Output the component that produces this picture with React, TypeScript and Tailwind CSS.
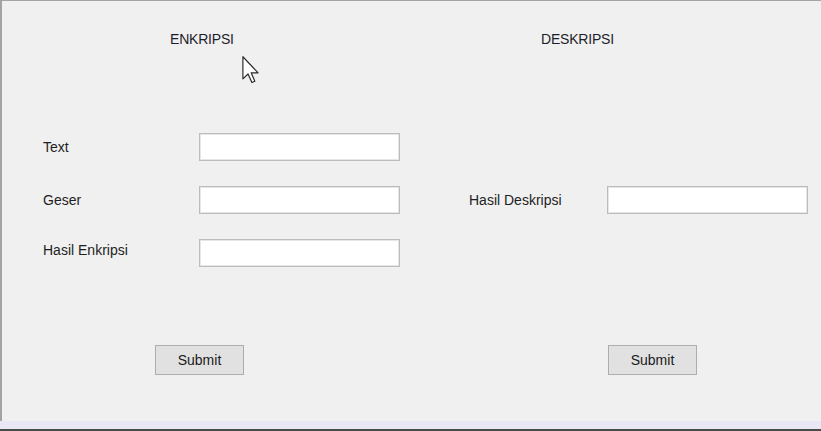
const font = { fontFamily: '"Liberation Sans", Arial, sans-serif' };

const Field = ({ label, labelWidth = "w-[156px]", labelClass = "" }: { label: string; labelWidth?: string; labelClass?: string }) => (
  <div className="flex items-center">
    <span className={`${labelWidth} shrink-0 text-[14px] text-[#1e1e1e] ${labelClass}`}>{label}</span>
    <div className="w-[201px] h-[28px] shrink-0 bg-white border border-[#bcbcbc] shadow-[inset_0_0_0_1px_#e6e6e6]" />
  </div>
);

const SubmitButton = ({ className }: { className: string }) => (
  <button
    className={`w-[89px] h-[30px] bg-[#e1e1e1] border border-[#adadad] text-[14px] text-[#1a1a1a] ${className}`}
  >
    Submit
  </button>
);

const Cursor = () => (
  <svg
    className="absolute left-[240px] top-[55px]"
    width="18"
    height="28"
    viewBox="0 0 12 19"
  >
    <path
      d="M0.5 0.5 L0.5 15.5 L4 12.2 L6.6 18 L8.6 17.1 L6.1 11.4 L10.8 11.4 Z"
      fill="#ffffff"
      stroke="#2a2a2a"
      strokeWidth="0.8"
      strokeLinejoin="round"
    />
  </svg>
);

export default function App() {
  return (
    <div className="w-[821px] h-[431px] flex flex-col bg-[#f0f0f0] overflow-hidden" style={font}>
      <div className="relative flex-1 flex border-l-2 border-t border-[#a3a3a3]">
        <div className="w-[428px] shrink-0 pl-[41px] pt-[30px] flex flex-col">
          <h2 className="ml-[127px] text-[14px] leading-[16px] tracking-[-0.2px] text-[#1e1e2a]">ENKRIPSI</h2>
          <div className="mt-[86px] flex flex-col gap-[25px]">
            <Field label="Text" />
            <Field label="Geser" />
            <Field label="Hasil Enkripsi" labelClass="mb-[6px]" />
          </div>
          <SubmitButton className="mt-[78px] ml-[112px]" />
        </div>
        <div className="flex-1 min-w-0 pl-[39px] pt-[30px] flex flex-col">
          <h2 className="ml-[72px] text-[14px] leading-[16px] tracking-[-0.2px] text-[#1e1e2a]">DESKRIPSI</h2>
          <div className="mt-[139px]">
            <Field label="Hasil Deskripsi" labelWidth="w-[138px]" />
          </div>
          <SubmitButton className="mt-[131px] ml-[139px]" />
        </div>
        <Cursor />
      </div>
      <div className="h-[8px] bg-[#e9e7f6]" />
      <div className="h-[2px] bg-[#4a4a4a]" />
    </div>
  );
}
